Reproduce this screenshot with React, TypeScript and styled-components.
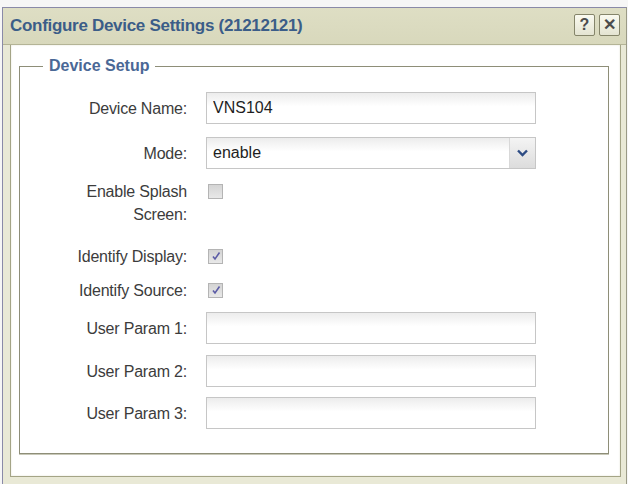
import React from "react";
import styled, { createGlobalStyle } from "styled-components";

const GlobalStyle = createGlobalStyle`
  html, body {
    margin: 0;
    padding: 0;
    background: #f6f6f6;
    font-family: "Liberation Sans", Arial, sans-serif;
  }
`;

const Page = styled.div`
  padding: 7px 1px 0 2px;
  height: 484px;
  box-sizing: border-box;
  overflow: hidden;
`;

const Window = styled.div`
  border: 1px solid #8a8aa8;
  border-right-color: #9a9a86;
  background: #e9e9d6;
  height: 500px;
`;

const TitleBar = styled.div`
  height: 36px;
  display: flex;
  align-items: center;
  justify-content: space-between;
  padding: 0 6px 0 7px;
  background: linear-gradient(#dedec4, #d8d8bc);
  border-bottom: 1px solid #b4b496;
`;

const Title = styled.div`
  font-size: 17px;
  font-weight: bold;
  color: #3b5d88;
  letter-spacing: -0.3px;
`;

const TitleButtons = styled.div`
  display: flex;
  gap: 4px;
  margin-top: -2px;
`;

const TitleButton = styled.button`
  width: 21px;
  height: 22px;
  padding: 0;
  border: 1px solid #85856a;
  border-radius: 2px;
  background: linear-gradient(#fafaf0, #e4e4d2);
  color: #4c4c4c;
  font-family: "Liberation Sans", Arial, sans-serif;
  font-size: 16px;
  font-weight: bold;
  line-height: 20px;
  text-align: center;
`;

const Panel = styled.div`
  margin: 0 5px 0 7px;
  height: 432px;
  background: #ffffff;
  border: 1px solid #a4a486;
  border-top: none;
  box-shadow: inset 0 0 2px #e0e0d0;
  padding: 12px 11px 0 8px;
  box-sizing: border-box;
`;

const Fieldset = styled.fieldset`
  margin: 0;
  padding: 0;
  height: 397px;
  box-sizing: border-box;
  border: 1px solid #8e8e78;
  box-shadow: 0 1px 0 #c8c8b8;
`;

const Legend = styled.legend`
  margin-left: 23px;
  padding: 0 6px;
  font-size: 16px;
  font-weight: bold;
  line-height: 18px;
  color: #4a6896;
`;

const Form = styled.div`
  padding-top: 17px;
  display: flex;
  flex-direction: column;
`;

const Row = styled.div<{ $space: number; $height: number; $top?: boolean }>`
  display: grid;
  grid-template-columns: 167px 330px;
  column-gap: 19px;
  align-items: ${(p) => (p.$top ? "start" : "center")};
  margin-top: ${(p) => p.$space}px;
  height: ${(p) => p.$height}px;
`;

const Label = styled.label`
  font-size: 16px;
  line-height: 23px;
  color: #3c3c3c;
  text-align: right;
  letter-spacing: -0.2px;
`;

const TextInput = styled.input`
  height: 32px;
  box-sizing: border-box;
  border: 1px solid #c6c6c6;
  background: linear-gradient(#ececec, #ffffff 45%);
  padding: 0 6px;
  font-family: "Liberation Sans", Arial, sans-serif;
  font-size: 16px;
  color: #1e1e1e;
  outline: none;
`;

const Select = styled.div`
  height: 32px;
  box-sizing: border-box;
  border: 1px solid #c6c6c6;
  background: linear-gradient(#ececec, #ffffff 45%);
  display: flex;
  align-items: center;
  justify-content: space-between;
  padding-left: 6px;
  font-size: 16px;
  color: #1e1e1e;
`;

const SelectButton = styled.div`
  width: 25px;
  height: 30px;
  border-left: 1px solid #d8d8d8;
  background: linear-gradient(#f4f4f4, #dcdcdc);
  display: flex;
  align-items: center;
  justify-content: center;
`;

const Check = styled.div<{ $checked?: boolean }>`
  width: 15px;
  height: 15px;
  box-sizing: border-box;
  border: 1px solid #b4b4b4;
  background: linear-gradient(#d4d4d4, #e8e8e8);
  margin-left: 2px;
  margin-top: ${(p) => (p.$checked ? 0 : 4)}px;
  display: flex;
  align-items: center;
  justify-content: center;
`;

const Chevron = () => (
  <svg width="11" height="8" viewBox="0 0 11 8">
    <path d="M1 1.5 L5.5 6 L10 1.5" fill="none" stroke="#2d4c84" strokeWidth="2.4" />
  </svg>
);

const Tick = () => (
  <svg width="10" height="10" viewBox="0 0 10 10">
    <path d="M2 5.5 L4 8 L8.5 1.5" fill="none" stroke="#5c5ca6" strokeWidth="1.6" />
  </svg>
);

export default function App() {
  return (
    <>
      <GlobalStyle />
      <Page>
        <Window>
          <TitleBar>
            <Title>Configure Device Settings (21212121)</Title>
            <TitleButtons>
              <TitleButton>?</TitleButton>
              <TitleButton>✕</TitleButton>
            </TitleButtons>
          </TitleBar>
          <Panel>
            <Fieldset>
              <Legend>Device Setup</Legend>
              <Form>
                <Row $space={0} $height={32}>
                  <Label>Device Name:</Label>
                  <TextInput defaultValue="VNS104" />
                </Row>
                <Row $space={13} $height={32}>
                  <Label>Mode:</Label>
                  <Select>
                    enable
                    <SelectButton>
                      <Chevron />
                    </SelectButton>
                  </Select>
                </Row>
                <Row $space={11} $height={46} $top>
                  <Label>
                    Enable Splash
                    <br />
                    Screen:
                  </Label>
                  <Check />
                </Row>
                <Row $space={18} $height={24}>
                  <Label>Identify Display:</Label>
                  <Check $checked>
                    <Tick />
                  </Check>
                </Row>
                <Row $space={10} $height={24}>
                  <Label>Identify Source:</Label>
                  <Check $checked>
                    <Tick />
                  </Check>
                </Row>
                <Row $space={10} $height={32}>
                  <Label>User Param 1:</Label>
                  <TextInput />
                </Row>
                <Row $space={11} $height={32}>
                  <Label>User Param 2:</Label>
                  <TextInput />
                </Row>
                <Row $space={10} $height={32}>
                  <Label>User Param 3:</Label>
                  <TextInput />
                </Row>
              </Form>
            </Fieldset>
          </Panel>
        </Window>
      </Page>
    </>
  );
}
